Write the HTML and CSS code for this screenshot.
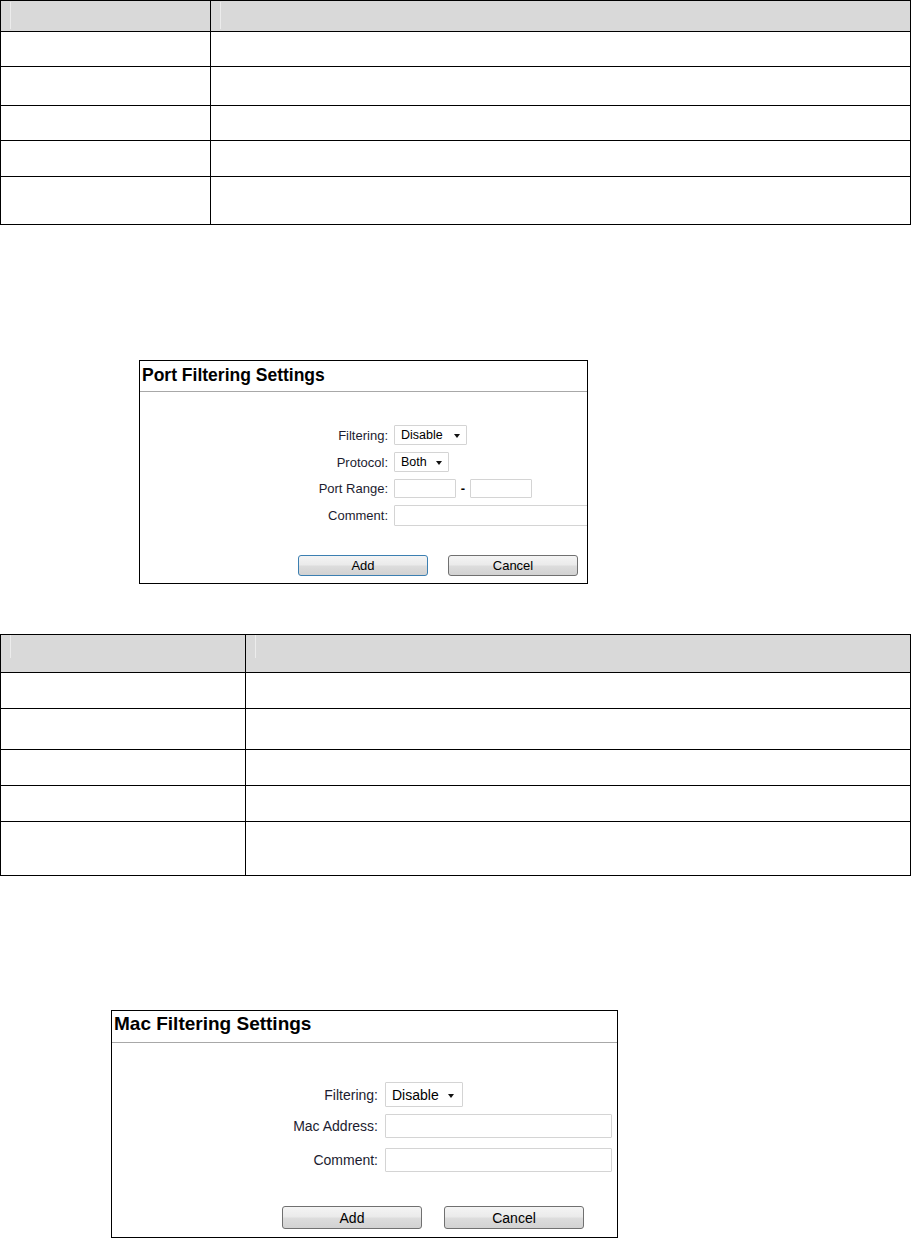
FILE: index.html
```html
<!DOCTYPE html>
<html>
<head>
<meta charset="utf-8">
<link rel="stylesheet" href="styles.css">
</head>
<body>
<div class="page">
  <table class="doc-table t1">
    <colgroup><col class="c1a"><col></colgroup>
    <tr class="hdr"><th><div class="mark"></div></th><th><div class="mark"></div></th></tr>
    <tr class="r35"><td></td><td></td></tr>
    <tr class="r39"><td></td><td></td></tr>
    <tr class="r35"><td></td><td></td></tr>
    <tr class="r36"><td></td><td></td></tr>
    <tr class="r48"><td></td><td></td></tr>
  </table>

  <div class="panel port">
    <div class="panel-title">Port Filtering Settings</div>
    <div class="form">
      <div class="frow"><div class="lbl">Filtering:</div><div class="sel w73">Disable<span class="arr"></span></div></div>
      <div class="frow"><div class="lbl">Protocol:</div><div class="sel w55">Both<span class="arr"></span></div></div>
      <div class="frow"><div class="lbl">Port Range:</div><div class="inp w62"></div><span class="dash">-</span><div class="inp w62"></div></div>
      <div class="frow"><div class="lbl">Comment:</div><div class="inp wlong"></div></div>
    </div>
    <div class="btns">
      <div class="btn focus">Add</div>
      <div class="btn">Cancel</div>
    </div>
  </div>

  <table class="doc-table t2">
    <colgroup><col class="c2a"><col></colgroup>
    <tr class="hdr2"><th><div class="mark"></div></th><th><div class="mark"></div></th></tr>
    <tr class="r36"><td></td><td></td></tr>
    <tr class="r41"><td></td><td></td></tr>
    <tr class="r36"><td></td><td></td></tr>
    <tr class="r36"><td></td><td></td></tr>
    <tr class="r54"><td></td><td></td></tr>
  </table>

  <div class="panel mac">
    <div class="panel-title">Mac Filtering Settings</div>
    <div class="form">
      <div class="frow"><div class="lbl">Filtering:</div><div class="sel w78">Disable<span class="arr"></span></div></div>
      <div class="frow"><div class="lbl">Mac Address:</div><div class="inp w227"></div></div>
      <div class="frow"><div class="lbl">Comment:</div><div class="inp w227"></div></div>
    </div>
    <div class="btns">
      <div class="btn">Add</div>
      <div class="btn">Cancel</div>
    </div>
  </div>
</div>
</body>
</html>
```

FILE: styles.css
```css
html, body {
  margin: 0;
  padding: 0;
  background: #fff;
}
body {
  font-family: "Liberation Sans", Arial, sans-serif;
  color: #000;
}
.page {
  width: 911px;
  display: flex;
  flex-direction: column;
  align-items: flex-start;
}

/* document tables */
.doc-table {
  width: 911px;
  border-collapse: collapse;
  table-layout: fixed;
  border: 1px solid #000;
}
.doc-table th,
.doc-table td {
  border: 1px solid #000;
  padding: 0;
  box-sizing: border-box;
}
.doc-table th {
  background: #d9d9d9;
  text-align: left;
  vertical-align: top;
}
.doc-table .mark {
  margin-left: 9px;
  margin-top: 1px;
  width: 1px;
  height: 27px;
  background: #ececec;
}
.c1a { width: 210px; }
.c2a { width: 245px; }
.hdr th { height: 31px; }
.hdr2 th { height: 38px; }
.hdr2 .mark { height: 23px; margin-top: 0; }
.r35 td { height: 35px; }
.r36 td { height: 36px; }
.r39 td { height: 39px; }
.r41 td { height: 41px; }
.r48 td { height: 48px; }
.r54 td { height: 54px; }

.t2 { margin-top: 50px; }

/* panels */
.panel {
  box-sizing: border-box;
  border: 1px solid #000;
  overflow: hidden;
  background: #fff;
}
.panel-title {
  font-weight: bold;
  color: #000;
  border-bottom: 1px solid #a8a8a8;
  box-sizing: border-box;
  padding-left: 2px;
}
.form {
  display: flex;
  flex-direction: column;
}
.frow {
  display: flex;
  align-items: center;
}
.lbl {
  text-align: right;
  color: #1c1c30;
  flex: none;
}
.sel, .inp {
  box-sizing: border-box;
  border: 1px solid #d4d4d4;
  border-radius: 1px;
  background: #fff;
  flex: none;
  position: relative;
}
.sel {
  display: flex;
  align-items: center;
  color: #000;
}
.arr {
  position: absolute;
  width: 0;
  height: 0;
  border-left: 3.5px solid transparent;
  border-right: 3.5px solid transparent;
  border-top: 4px solid #111;
}
.btns {
  display: flex;
}
.btn {
  box-sizing: border-box;
  border: 1px solid #707070;
  border-radius: 3px;
  background: linear-gradient(#f4f4f4 0%, #ebebeb 45%, #dcdcdc 55%, #d2d2d2 100%);
  display: flex;
  align-items: center;
  justify-content: center;
  color: #000;
}
.btn.focus {
  border-color: #3c7fb1;
}

/* port panel */
.port {
  margin-top: 135px;
  margin-left: 139px;
  width: 449px;
  height: 224px;
}
.port .panel-title {
  font-size: 17.5px;
  height: 31px;
  line-height: 28px;
}
.port .form {
  margin-top: 33px;
  gap: 7px;
}
.port .frow { height: 20px; }
.port .lbl {
  width: 248px;
  margin-right: 6px;
  font-size: 13px;
}
.port .sel, .port .inp { height: 20px; font-size: 12.5px; }
.port .sel { padding-left: 6px; }
.port .sel .arr { right: 6px; top: 8px; }
.w73 { width: 73px; }
.w55 { width: 55px; }
.w62 { width: 62px; }
.wlong { width: 220px; }
.port .frow:nth-child(3) { height: 19px; }
.port .frow:nth-child(3) .inp { height: 19px; }
.port .frow:nth-child(4) { height: 21px; }
.port .frow:nth-child(4) .inp { height: 21px; }
.dash {
  width: 14px;
  text-align: center;
  font-size: 13px;
  font-weight: bold;
}
.port .btns {
  margin-top: 29px;
  margin-left: 158px;
  gap: 20px;
}
.port .btn {
  width: 130px;
  height: 21px;
  font-size: 13px;
}

/* mac panel */
.mac {
  margin-top: 134px;
  margin-left: 111px;
  width: 507px;
  height: 228px;
}
.mac .panel-title {
  font-size: 19px;
  height: 32px;
  line-height: 26px;
}
.mac .form {
  margin-top: 39px;
}
.mac .frow:nth-child(1) { height: 25px; }
.mac .frow:nth-child(2) { height: 24px; margin-top: 7px; }
.mac .frow:nth-child(3) { height: 24px; margin-top: 10px; }
.mac .lbl {
  width: 266px;
  margin-right: 7px;
  font-size: 14px;
}
.mac .sel, .mac .inp { height: 100%; font-size: 14px; }
.mac .sel { padding-left: 6px; }
.mac .sel .arr { right: 8px; top: 11px; }
.w78 { width: 78px; }
.w227 { width: 227px; }
.mac .btns {
  margin-top: 34px;
  margin-left: 170px;
  gap: 22px;
}
.mac .btn {
  width: 140px;
  height: 23px;
  font-size: 14px;
}
```
